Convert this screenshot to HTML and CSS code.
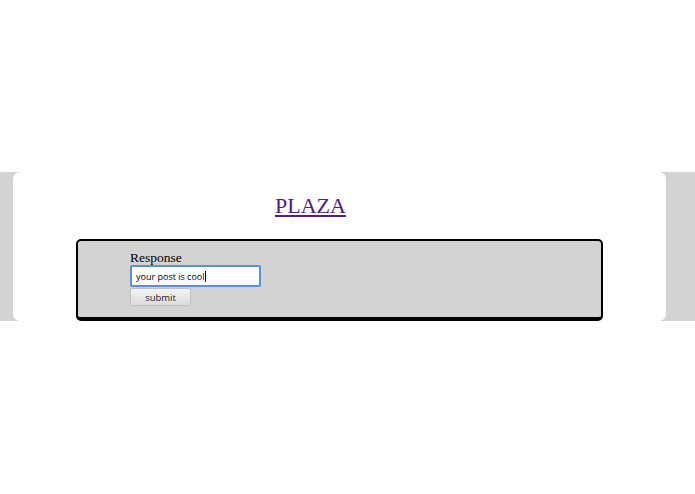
FILE: index.html
```html
<!DOCTYPE html>
<html>
<head>
<meta charset="utf-8">
<link rel="stylesheet" href="styles.css">
</head>
<body>
<div class="band">
  <div class="sheet">
    <h1 class="title"><a href="#" class="title-link">PLAZA</a></h1>
    <form class="panel">
      <label class="label">Response</label>
      <div class="field"><span class="field-text">your post is cool</span><span class="caret"></span></div>
      <button class="btn" type="button">submit</button>
    </form>
  </div>
</div>
</body>
</html>
```
FILE: styles.css
```css
html, body {
  margin: 0;
  padding: 0;
  background: #ffffff;
}
body {
  padding-top: 172px;
  font-family: "Liberation Serif", serif;
}
.band {
  background: #d3d3d3;
  padding: 0 29px 0 13px;
}
.sheet {
  background: #ffffff;
  border-radius: 7px;
  height: 149px;
  padding-top: 21px;
  box-sizing: border-box;
}
.title {
  margin: 0;
  padding-left: 262px;
  font-size: 22px;
  font-weight: normal;
  line-height: 25px;
  height: 46px;
}
.title-link {
  color: #551a8b;
  text-decoration: underline;
}
.panel {
  margin: 0 63px;
  background: #d3d3d3;
  border: 2px solid #000;
  border-bottom-width: 4px;
  border-radius: 5px;
  height: 82px;
  padding: 10px 0 0 52px;
  box-sizing: border-box;
  display: flex;
  flex-direction: column;
  align-items: flex-start;
}
.label {
  font-size: 13.5px;
  line-height: 14px;
  color: #000;
}
.field {
  width: 131px;
  height: 22px;
  box-sizing: border-box;
  border: 2px solid #5b8fd8;
  border-radius: 2px;
  background: #fff;
  font-family: "Open Sans", "DejaVu Sans", sans-serif;
  font-size: 9px;
  padding: 0 4px;
  display: flex;
  align-items: center;
  color: #000;
}
.caret {
  display: inline-block;
  width: 1px;
  height: 11px;
  background: #000;
}
.btn {
  margin-top: 1px;
  width: 61px;
  height: 18px;
  border: 1px solid #c0c0c0;
  border-radius: 2px;
  background: linear-gradient(#f4f4f4, #dcdcdc);
  font-family: "Open Sans", "DejaVu Sans", sans-serif;
  font-size: 9.5px;
  color: #222;
  padding: 0;
}
```
